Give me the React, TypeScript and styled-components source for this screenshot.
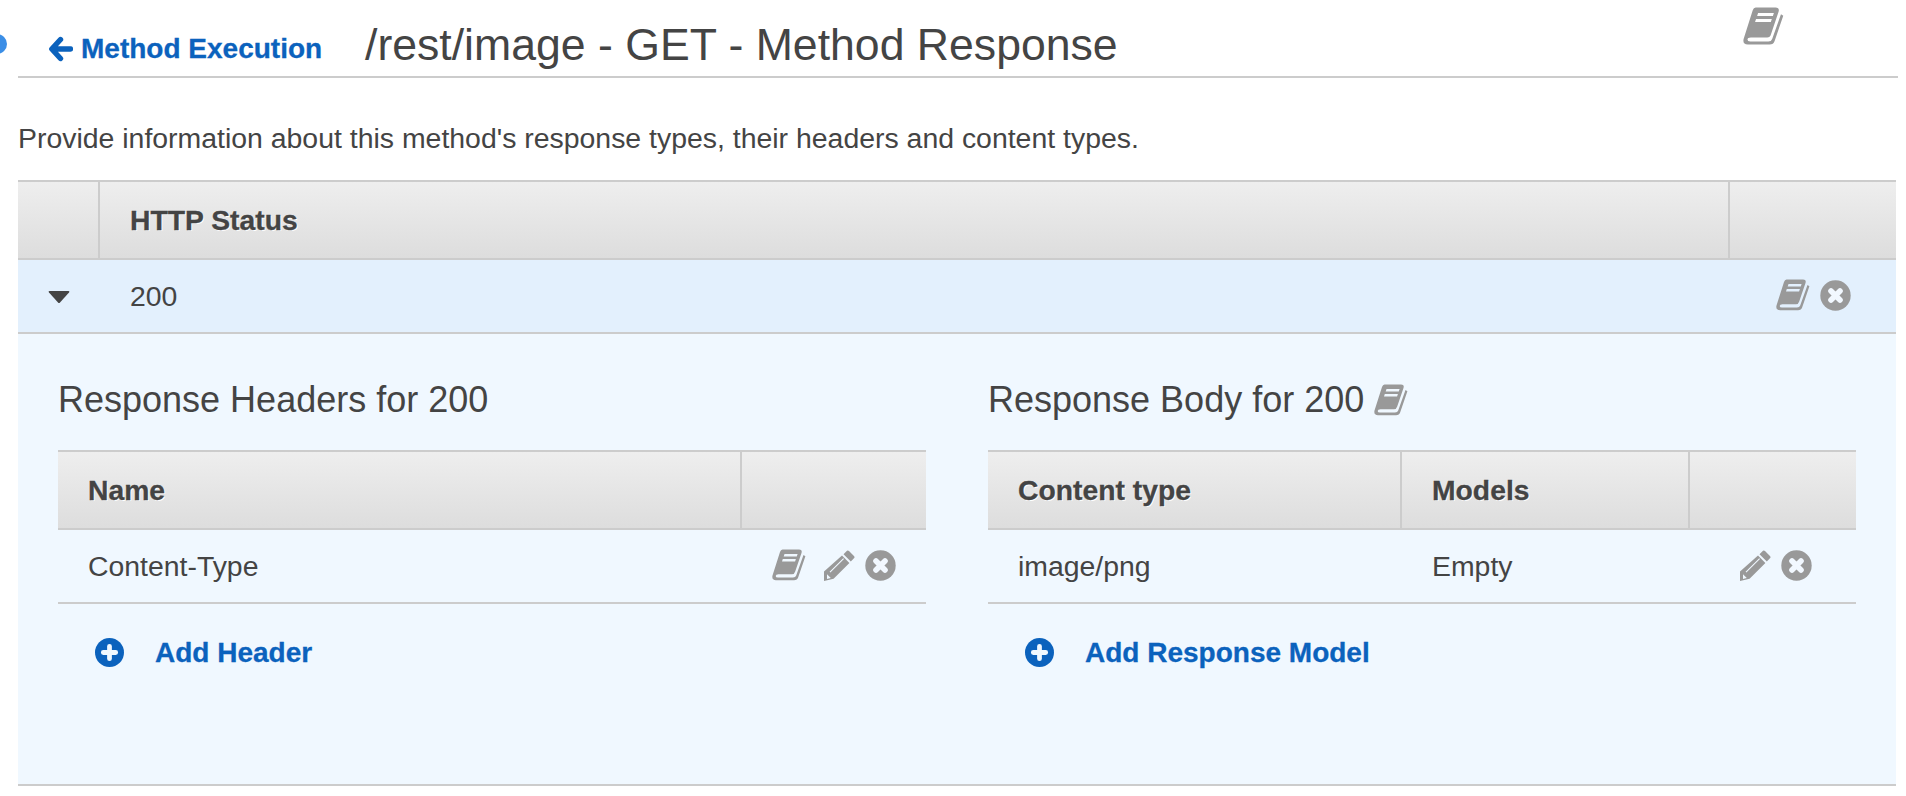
import React from "react";
import styled, { createGlobalStyle } from "styled-components";

const GlobalStyle = createGlobalStyle`
  html, body {
    margin: 0;
    background: #fff;
    overflow: hidden;
  }
  body {
    font-family: "Liberation Sans", Arial, sans-serif;
    color: #444;
  }
`;

const Page = styled.div`
  position: relative;
  width: 1906px;
  height: 796px;
  padding: 0 10px 0 18px;
  box-sizing: border-box;
`;

const StatusDot = styled.span`
  position: absolute;
  left: -13px;
  top: 34px;
  width: 20px;
  height: 20px;
  border-radius: 50%;
  background: #3b8ee6;
`;

const Header = styled.header`
  display: flex;
  align-items: flex-start;
  height: 76px;
  margin-right: -2px;
  padding-left: 31px;
  border-bottom: 2px solid #ccc;
  box-sizing: content-box;
`;

const BackLink = styled.a`
  display: flex;
  align-items: center;
  gap: 8px;
  width: 316px;
  flex: none;
  margin-top: 33px;
  font-size: 28px;
  font-weight: 700;
  -webkit-text-stroke: 0.3px #0b62bd;
  color: #0b62bd;
  line-height: 32px;
`;

const Title = styled.h1`
  margin: 19px 0 0;
  flex: 1;
  font-size: 44.6px;
  font-weight: 400;
  line-height: 52px;
  color: #444;
`;

const HelpSlot = styled.div`
  width: 155px;
  flex: none;
  margin-top: 7px;
  color: #999;
  svg {
    display: block;
  }
`;

const Intro = styled.p`
  margin: 0;
  height: 102px;
  box-sizing: border-box;
  padding-top: 44px;
  font-size: 28.43px;
  line-height: 32px;
  color: #444;
`;

const Row = styled.div<{ $cols: string }>`
  display: grid;
  grid-template-columns: ${(p) => p.$cols};
  border-bottom: 2px solid #ccc;
  align-items: stretch;
`;

const HeadRow = styled(Row)`
  border-top: 2px solid #ccc;
  height: 80px;
  box-sizing: border-box;
  background: linear-gradient(#eee, #ddd);
`;

const BodyRow = styled(Row)<{ $bg?: string }>`
  height: 74px;
  box-sizing: border-box;
  background: ${(p) => p.$bg || "transparent"};
`;

const HeadCell = styled.div<{ $divider?: boolean }>`
  display: flex;
  align-items: center;
  padding-left: 30px;
  font-size: 28.3px;
  font-weight: 700;
  -webkit-text-stroke: 0.3px #444;
  color: #444;
  text-shadow: 1px 1px 0 #fff;
  border-right: ${(p) => (p.$divider ? "2px solid #ccc" : "none")};
`;

const Cell = styled.div`
  display: flex;
  align-items: center;
  padding-left: 30px;
  font-size: 28.4px;
  color: #444;
`;

const CaretCell = styled.div`
  display: flex;
  align-items: center;
  padding: 2px 0 0 30px;
`;

const IconCell = styled.div<{ $inset: number }>`
  display: flex;
  align-items: center;
  justify-content: flex-end;
  gap: 10px;
  color: #999;
  padding: 0 ${(p) => p.$inset}px 2px 0;
`;

const BookSlot = styled.span<{ $after?: number }>`
  display: flex;
  margin-right: ${(p) => p.$after ?? 0}px;
`;

const Panel = styled.section`
  display: grid;
  grid-template-columns: 868px 868px;
  column-gap: 62px;
  align-content: start;
  height: 452px;
  box-sizing: border-box;
  padding: 0 40px;
  background: #f0f8ff;
  border-bottom: 2px solid #ccc;
`;

const SubTitle = styled.h3`
  display: flex;
  align-items: center;
  gap: 10px;
  margin: 0;
  height: 116px;
  box-sizing: border-box;
  padding-top: 15px;
  font-size: 36px;
  font-weight: 400;
  color: #444;
`;

const SubIcon = styled.span`
  color: #999;
  display: flex;
`;

const AddRow = styled.a`
  display: flex;
  align-items: center;
  height: 97px;
  box-sizing: border-box;
  padding: 0 0 0 37px;
  gap: 31px;
  font-size: 28px;
  font-weight: 700;
  -webkit-text-stroke: 0.3px #0b62bd;
  color: #0b62bd;
`;

const BackArrow = () => (
  <svg width="24" height="26" viewBox="0 0 24 26">
    <path
      d="M11.5 3.5L2.8 13L11.5 22.5M3.5 13H21.5"
      stroke="#0b62bd"
      strokeWidth="5.4"
      strokeLinecap="round"
      strokeLinejoin="round"
      fill="none"
    />
  </svg>
);

const BookIcon = ({ size = 34 }: { size?: number }) => (
  <svg width={size} height={(size * 32) / 34} viewBox="0 0 34 32" fill="currentColor">
    <path
      fillRule="evenodd"
      d="M10.5 .5H27Q30.5 .5 29.5 4L23.2 22.5Q22.5 25.2 20 25.2H6.5Q3.7 25.2 3.7 27Q3.7 28.6 6 28.6H21Q23.5 28.6 24.2 26.5L31.5 6L33.4 7.2L26.3 28Q25.3 31.2 22 31.2H4Q-.5 31.2 .5 26.5L8 3Q8.8 .5 10.5 .5ZM12.5 5H25.6L24.8 7.5H11.7ZM10.8 10H23.9L23.1 12.5H10Z"
    />
  </svg>
);

const PencilIcon = () => (
  <svg width="31" height="31" viewBox="0 0 31 31" fill="currentColor">
    <path
      fillRule="evenodd"
      d="M23 .8Q24 0 25 1L30.2 6.2Q31 7.2 30.2 8L26.8 11.5L19.5 4.2ZM18 5.6L25.4 13L9.6 28.8L0 31V21.5ZM19.2 8.2L20 9L6.4 22.6L5.6 21.8ZM3 24.2L6.8 28L3 29Z"
    />
  </svg>
);

const CloseIcon = () => (
  <svg width="31" height="31" viewBox="0 0 31 31">
    <circle cx="15.5" cy="15.5" r="15.2" fill="#999" />
    <path
      d="M11 11L20 20M20 11L11 20"
      stroke="#f2f8ff"
      strokeWidth="5.6"
      strokeLinecap="round"
      fill="none"
    />
  </svg>
);

const PlusIcon = () => (
  <svg width="29" height="29" viewBox="0 0 28 28">
    <circle cx="14" cy="14" r="14" fill="#0b62bd" />
    <path
      d="M14 8V20M8 14H20"
      stroke="#f0f8ff"
      strokeWidth="4.6"
      strokeLinecap="round"
      fill="none"
    />
  </svg>
);

const Caret = () => (
  <svg width="22" height="12" viewBox="0 0 22 12" fill="#444">
    <path d="M1.6 0H20.4Q22 0 21 1.4L12 11.4Q11 12.4 10 11.4L1 1.4Q0 0 1.6 0Z" />
  </svg>
);

const App = () => (
  <Page>
    <GlobalStyle />
    <StatusDot />
    <Header>
      <BackLink>
        <BackArrow />
        Method Execution
      </BackLink>
      <Title>/rest/image - GET - Method Response</Title>
      <HelpSlot>
        <BookIcon size={41} />
      </HelpSlot>
    </Header>
    <Intro>Provide information about this method's response types, their headers and content types.</Intro>

    <HeadRow $cols="82px 1fr 166px">
      <HeadCell $divider />
      <HeadCell $divider>HTTP Status</HeadCell>
      <HeadCell />
    </HeadRow>
    <BodyRow $cols="82px 1fr 166px" $bg="#e3f0fd">
      <CaretCell>
        <Caret />
      </CaretCell>
      <Cell>200</Cell>
      <IconCell $inset={45}>
        <BookIcon />
        <CloseIcon />
      </IconCell>
    </BodyRow>

    <Panel>
      <div>
        <SubTitle>Response Headers for 200</SubTitle>
        <HeadRow $cols="684px 1fr">
          <HeadCell $divider>Name</HeadCell>
          <HeadCell />
        </HeadRow>
        <BodyRow $cols="1fr 200px">
          <Cell>Content-Type</Cell>
          <IconCell $inset={30}>
            <BookSlot $after={8}>
              <BookIcon />
            </BookSlot>
            <PencilIcon />
            <CloseIcon />
          </IconCell>
        </BodyRow>
        <AddRow>
          <PlusIcon />
          Add Header
        </AddRow>
      </div>
      <div>
        <SubTitle>
          Response Body for 200
          <SubIcon>
            <BookIcon />
          </SubIcon>
        </SubTitle>
        <HeadRow $cols="414px 288px 1fr">
          <HeadCell $divider>Content type</HeadCell>
          <HeadCell $divider>Models</HeadCell>
          <HeadCell />
        </HeadRow>
        <BodyRow $cols="414px 288px 1fr">
          <Cell>image/png</Cell>
          <Cell>Empty</Cell>
          <IconCell $inset={44}>
            <PencilIcon />
            <CloseIcon />
          </IconCell>
        </BodyRow>
        <AddRow>
          <PlusIcon />
          Add Response Model
        </AddRow>
      </div>
    </Panel>
  </Page>
);

export default App;
